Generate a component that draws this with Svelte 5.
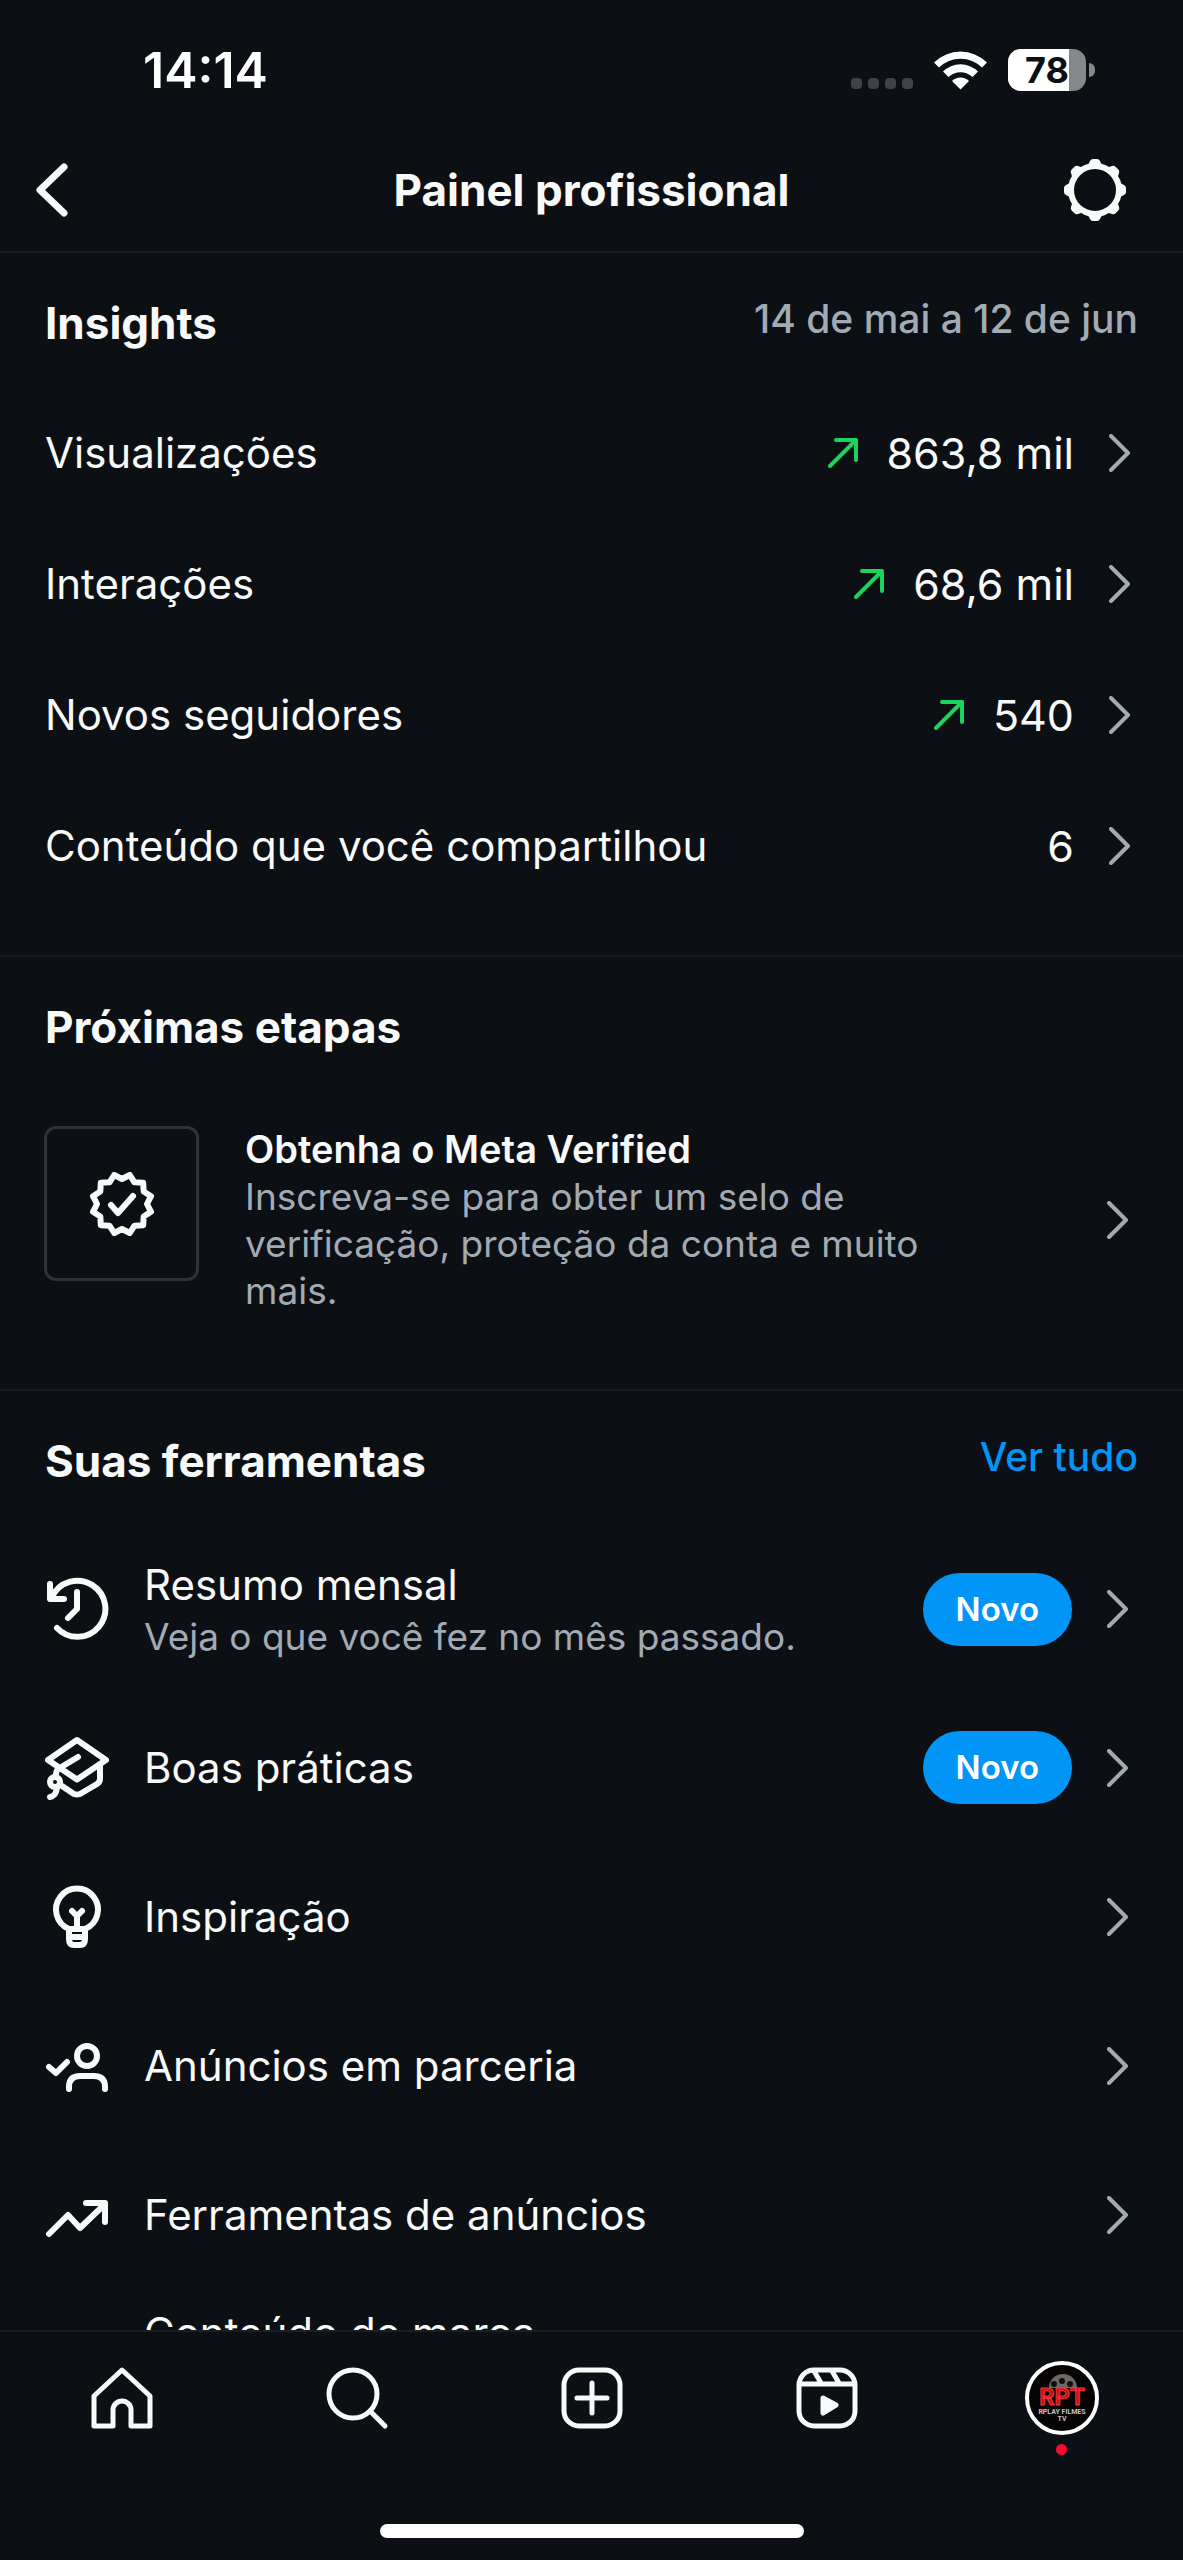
<script>
  const insights = [
    { label: "Visualizações", value: "863,8 mil", up: true },
    { label: "Interações", value: "68,6 mil", up: true },
    { label: "Novos seguidores", value: "540", up: true },
    { label: "Conteúdo que você compartilhou", value: "6", up: false },
  ];

  const tools = [
    { icon: "history", label: "Resumo mensal", note: "Veja o que você fez no mês passado.", isNew: true },
    { icon: "cap", label: "Boas práticas", isNew: true },
    { icon: "bulb", label: "Inspiração" },
    { icon: "partner", label: "Anúncios em parceria" },
    { icon: "trend", label: "Ferramentas de anúncios" },
  ];

  const battery = 78;

  // eight rounded teeth around the settings ring
  const teeth = [0, 45, 90, 135, 180, 225, 270, 315];

  // twelve-pointed zigzag outline of the verified badge
  const seal = Array.from({ length: 24 }, (_, i) => {
    const r = i % 2 ? 30 : 25;
    const a = (i * Math.PI) / 12;
    return `${(32 + r * Math.sin(a)).toFixed(1)},${(32 - r * Math.cos(a)).toFixed(1)}`;
  }).join(" ");
</script>

<svelte:head>
  <title>Painel profissional</title>
</svelte:head>

{#snippet chevron()}
  <svg class="chevron" viewBox="0 0 21 38" aria-hidden="true">
    <path d="M2 2l17 17L2 36" />
  </svg>
{/snippet}

<div class="screen">
  <div class="status">
    <span class="time">14:14</span>
    <div class="indicators">
      <span class="dots"><i></i><i></i><i></i><i></i></span>
      <svg class="wifi" viewBox="0 0 53 40" aria-hidden="true">
        <path d="M0 12.500a37.500 37.500 0 0 1 53 0l-5 5a30.500 30.500 0 0 0-43 0z" />
        <path d="M9 21.500a25 25 0 0 1 35 0l-5.500 5.500a17.500 17.500 0 0 0-24 0z" />
        <path d="M18 31a12 12 0 0 1 17 0l-8.500 8.500z" />
      </svg>
      <span class="battery">
        <span class="level" style="width: {battery}%"></span>
        <span class="percent">{battery}</span>
      </span>
      <span class="nub"></span>
    </div>
  </div>

  <header>
    <button aria-label="Voltar">
      <svg class="back" viewBox="0 0 32 54" aria-hidden="true">
        <path d="M28 4L4 27l24 23" />
      </svg>
    </button>
    <h1>Painel profissional</h1>
    <button class="settings" aria-label="Configurações">
      <svg class="icon solid" viewBox="0 0 64 64" aria-hidden="true">
        <circle class="ring" cx="32" cy="32" r="24" />
        {#each teeth as angle}
          <path d="M21 9q4-1 5-4l1-2q1-2 3-2h4q2 0 3 2l1 2q1 3 5 4z" transform="rotate({angle} 32 32)" />
        {/each}
      </svg>
    </button>
  </header>

  <main>
    <section class="insights">
      <div class="heading">
        <h2>Insights</h2>
        <span class="period">14 de mai a 12 de jun</span>
      </div>
      {#each insights as item}
        <a class="row metric" href="#insights">
          <span class="label">{item.label}</span>
          {#if item.up}
            <svg class="arrow" viewBox="0 0 30 30" aria-hidden="true">
              <path d="M2 28L28 2M8 2h20v20" />
            </svg>
          {/if}
          <span class="value">{item.value}</span>
          {@render chevron()}
        </a>
      {/each}
    </section>

    <section class="next">
      <div class="heading">
        <h2>Próximas etapas</h2>
      </div>
      <a class="step" href="#verified">
        <span class="tile">
          <svg class="icon" viewBox="0 0 64 64" aria-hidden="true">
            <polygon points={seal} />
            <path d="M21 33l7 8 15-17" />
          </svg>
        </span>
        <span class="text">
          <strong>Obtenha o Meta Verified</strong>
          <span class="note">Inscreva-se para obter um selo de verificação, proteção da conta e muito mais.</span>
        </span>
        {@render chevron()}
      </a>
    </section>

    <section class="tools">
      <div class="heading">
        <h2>Suas ferramentas</h2>
        <a class="all" href="#tools">Ver tudo</a>
      </div>
      {#each tools as tool}
        <a class="row tool" class:double={tool.note} href="#tools">
          <svg class="icon" viewBox="0 0 64 64" aria-hidden="true">
            {#if tool.icon === "history"}
              <path d="M12 51A28 28 0 1 0 7 20" />
              <path d="M5 7v15h14M32 15v17l-9 9" />
            {:else if tool.icon === "cap"}
              <path d="M32 4l29 20-29 19.500L3 24zM33 21L13 33q-2 2-2 6" />
              <path d="M55 30v13q0 3-3 5L35 58q-3 1-6 0L17 50" />
              <circle cx="10" cy="46" r="5" />
              <path d="M12 52q-1 8-7 9" />
            {:else if tool.icon === "bulb"}
              <path d="M24 44v10q0 6 5 6h6q5 0 5-6V44M24 44a21 21 0 1 1 16 0M24 44h16M25 52h14" />
              <path d="M32 42V31M27 26l5 5 5-5" />
            {:else if tool.icon === "partner"}
              <circle cx="42" cy="22" r="10" />
              <path d="M24 55v-2q0-11 11-11h14q11 0 11 11v2M4 33l7 6 11-11" />
            {:else}
              <path d="M4 51l19-19 12 13L60 21M41 20h19v19" />
            {/if}
          </svg>
          <span class="text">
            <span class="label">{tool.label}</span>
            {#if tool.note}
              <span class="note">{tool.note}</span>
            {/if}
          </span>
          {#if tool.isNew}
            <span class="badge">Novo</span>
          {/if}
          {@render chevron()}
        </a>
      {/each}
      <a class="row tool partial" href="#tools">
        <span class="label">Conteúdo de marca</span>
      </a>
    </section>
  </main>

  <footer>
    <nav>
      <a href="#home" aria-label="Página inicial">
        <svg class="icon thin" viewBox="0 0 64 64" aria-hidden="true">
          <path d="M32 4L60 30v30H41V44a9 9 0 0 0-18 0v16H4V30z" />
        </svg>
      </a>
      <a href="#search" aria-label="Pesquisar">
        <svg class="icon thin" viewBox="0 0 64 64" aria-hidden="true">
          <circle cx="28" cy="28" r="24" />
          <path d="M45 45l15 15" />
        </svg>
      </a>
      <a href="#create" aria-label="Criar">
        <svg class="icon thin" viewBox="0 0 64 64" aria-hidden="true">
          <rect x="4" y="4" width="56" height="56" rx="15" />
          <path d="M32 17v30M17 32h30" />
        </svg>
      </a>
      <a href="#reels" aria-label="Reels">
        <svg class="icon thin" viewBox="0 0 64 64" aria-hidden="true">
          <rect x="4" y="4" width="56" height="56" rx="15" />
          <path d="M5 18h54M19 5l7 12M37 5l7 12" />
          <path class="play" d="M28 32l13 7-13 8z" />
        </svg>
      </a>
      <a class="profile" href="#profile" aria-label="Perfil">
        <svg class="avatar" viewBox="0 0 74 74" aria-hidden="true">
          <circle class="frame" cx="37" cy="37" r="35" />
          <path class="reel" d="M24 27a14 14 0 0 1 28 0z" />
          <circle class="hole" cx="37" cy="20" r="3" />
          <circle class="hole" cx="29" cy="23" r="3" />
          <circle class="hole" cx="45" cy="23" r="3" />
          <text class="brand" x="37" y="44">RPT</text>
          <text class="tag" x="37" y="53">RPLAY FILMES</text>
          <text class="tag" x="37" y="60">TV</text>
        </svg>
        <span class="alert"></span>
      </a>
    </nav>
    <span class="home-bar"></span>
  </footer>
</div>

<style>
  :global(body) {
    background: #0c1014;
  }

  .screen {
    display: flex;
    flex-direction: column;
    height: 100vh;
    overflow: hidden;
    background: #0c1014;
    color: #f8f9f9;
    font-family: Inter, "Liberation Sans", sans-serif;
    font-size: 42px;
    line-height: 52px;
  }

  a {
    color: inherit;
    text-decoration: none;
  }

  button {
    display: flex;
    padding: 0;
    border: none;
    background: none;
    color: inherit;
  }

  h1,
  h2 {
    margin: 0;
    font-size: 44px;
    font-weight: 700;
  }

  svg {
    display: block;
    flex: none;
    fill: none;
    stroke: currentColor;
    stroke-width: 6;
    stroke-linecap: round;
    stroke-linejoin: round;
  }

  .icon {
    width: 64px;
    height: 64px;
  }

  .thin {
    stroke-width: 5;
  }

  .solid path {
    fill: currentColor;
    stroke: none;
  }

  .chevron {
    width: 21px;
    height: 38px;
    color: #a2aab4;
    stroke-width: 4;
  }

  .status {
    display: flex;
    justify-content: space-between;
    align-items: center;
    height: 140px;
    padding: 0 88px 0 143px;
    box-sizing: border-box;
    color: #fff;
  }

  .time {
    font-size: 50px;
    font-weight: 600;
  }

  .indicators {
    display: flex;
    align-items: center;
  }

  .dots {
    display: flex;
    align-self: flex-end;
    gap: 6px;
    margin: 0 21px 2px 0;
  }

  .dots i {
    width: 11px;
    height: 11px;
    border-radius: 4px;
    background: #3f4247;
  }

  .wifi {
    width: 53px;
    height: 40px;
    margin-right: 21px;
    fill: currentColor;
    stroke: none;
  }

  .battery {
    position: relative;
    width: 78px;
    height: 42px;
    border-radius: 13px;
    background: #858789;
  }

  .level {
    display: block;
    height: 100%;
    border-radius: 13px 0 0 13px;
    background: #fff;
  }

  .percent {
    position: absolute;
    inset: 0;
    color: #0c1014;
    font-size: 36px;
    font-weight: 700;
    line-height: 42px;
    text-align: center;
  }

  .nub {
    width: 6px;
    height: 14px;
    margin-left: 3px;
    border-radius: 0 7px 7px 0;
    background: #858789;
  }

  header {
    display: grid;
    grid-template-columns: 1fr auto 1fr;
    align-items: center;
    height: 113px;
    padding: 0 36px 12px;
    box-sizing: border-box;
    border-bottom: 2px solid #1a1e22;
  }

  .settings {
    justify-self: end;
    margin-right: 20px;
  }

  .back {
    width: 32px;
    height: 54px;
    stroke-width: 7;
  }

  main {
    flex: 1;
    min-height: 0;
    overflow: hidden;
  }

  section + section {
    border-top: 2px solid #171b1f;
  }

  .heading {
    display: flex;
    justify-content: space-between;
    padding: 44px 45px 0;
  }

  .period,
  .all {
    color: #a2aab4;
    font-size: 39px;
    font-weight: 500;
    line-height: 44px;
  }

  .all {
    color: #0095f6;
  }

  .row {
    display: flex;
    align-items: center;
    box-sizing: border-box;
  }

  .insights {
    padding-bottom: 44px;
  }

  .insights .heading,
  .tools .heading {
    padding-bottom: 38px;
  }

  .metric {
    height: 131px;
    padding: 0 53px 0 45px;
  }

  .metric .label {
    flex: 1;
  }

  .arrow {
    width: 30px;
    height: 30px;
    margin-right: 29px;
    color: #1cd15d;
    stroke-width: 4;
  }

  .value {
    margin-right: 35px;
    font-size: 43px;
  }

  .next {
    padding-bottom: 75px;
  }

  .step {
    display: flex;
    gap: 46px;
    padding: 73px 55px 0 44px;
  }

  .step .text {
    flex: 1;
    padding-right: 108px;
  }

  .step .chevron {
    align-self: center;
  }

  .tile {
    display: flex;
    align-items: center;
    justify-content: center;
    width: 155px;
    height: 155px;
    box-sizing: border-box;
    border: 3px solid #2f3337;
    border-radius: 12px;
  }

  .text {
    display: flex;
    flex-direction: column;
  }

  strong,
  .note {
    line-height: 47px;
  }

  strong {
    font-size: 38px;
    font-weight: 600;
  }

  .note {
    color: #a2aab4;
    font-size: 37px;
  }

  .tool {
    height: 149px;
    padding: 0 55px 0 45px;
  }

  .tool.double {
    height: 168px;
  }

  .tool .text {
    flex: 1;
    gap: 2px;
    margin-left: 35px;
  }

  .tool.partial {
    align-items: flex-start;
    padding: 18px 55px 0 144px;
  }

  .badge {
    margin-right: 35px;
    padding: 13px 33px;
    border-radius: 37px;
    background: #0095f6;
    color: #fff;
    font-size: 33px;
    font-weight: 600;
    line-height: 47px;
  }

  footer {
    display: flex;
    flex-direction: column;
    align-items: center;
    justify-content: space-between;
    height: 230px;
    padding-bottom: 22px;
    box-sizing: border-box;
    border-top: 2px solid #1a1e22;
  }

  nav {
    display: grid;
    grid-template-columns: repeat(5, 1fr);
    width: 100%;
    padding: 0 4px;
    box-sizing: border-box;
  }

  nav a {
    display: flex;
    flex-direction: column;
    align-items: center;
    justify-content: center;
    height: 132px;
  }

  .play {
    fill: currentColor;
  }

  .profile {
    position: relative;
  }

  .avatar {
    width: 74px;
    height: 74px;
    stroke: none;
  }

  .frame {
    fill: #050303;
    stroke: #fff;
    stroke-width: 4;
  }

  .reel {
    fill: #6d6765;
  }

  .hole {
    fill: #14100f;
  }

  .brand,
  .tag {
    font-family: Roboto, sans-serif;
    font-weight: 700;
    text-anchor: middle;
  }

  .brand {
    fill: #c01418;
    stroke: #f5333a;
    stroke-width: 1;
    font-size: 24px;
  }

  .tag {
    fill: #c9c5c3;
    font-size: 7px;
  }

  .alert {
    position: absolute;
    top: 112px;
    width: 11px;
    height: 11px;
    border-radius: 50%;
    background: #ff0a2e;
  }

  .home-bar {
    width: 424px;
    height: 14px;
    border-radius: 7px;
    background: #fff;
  }
</style>
